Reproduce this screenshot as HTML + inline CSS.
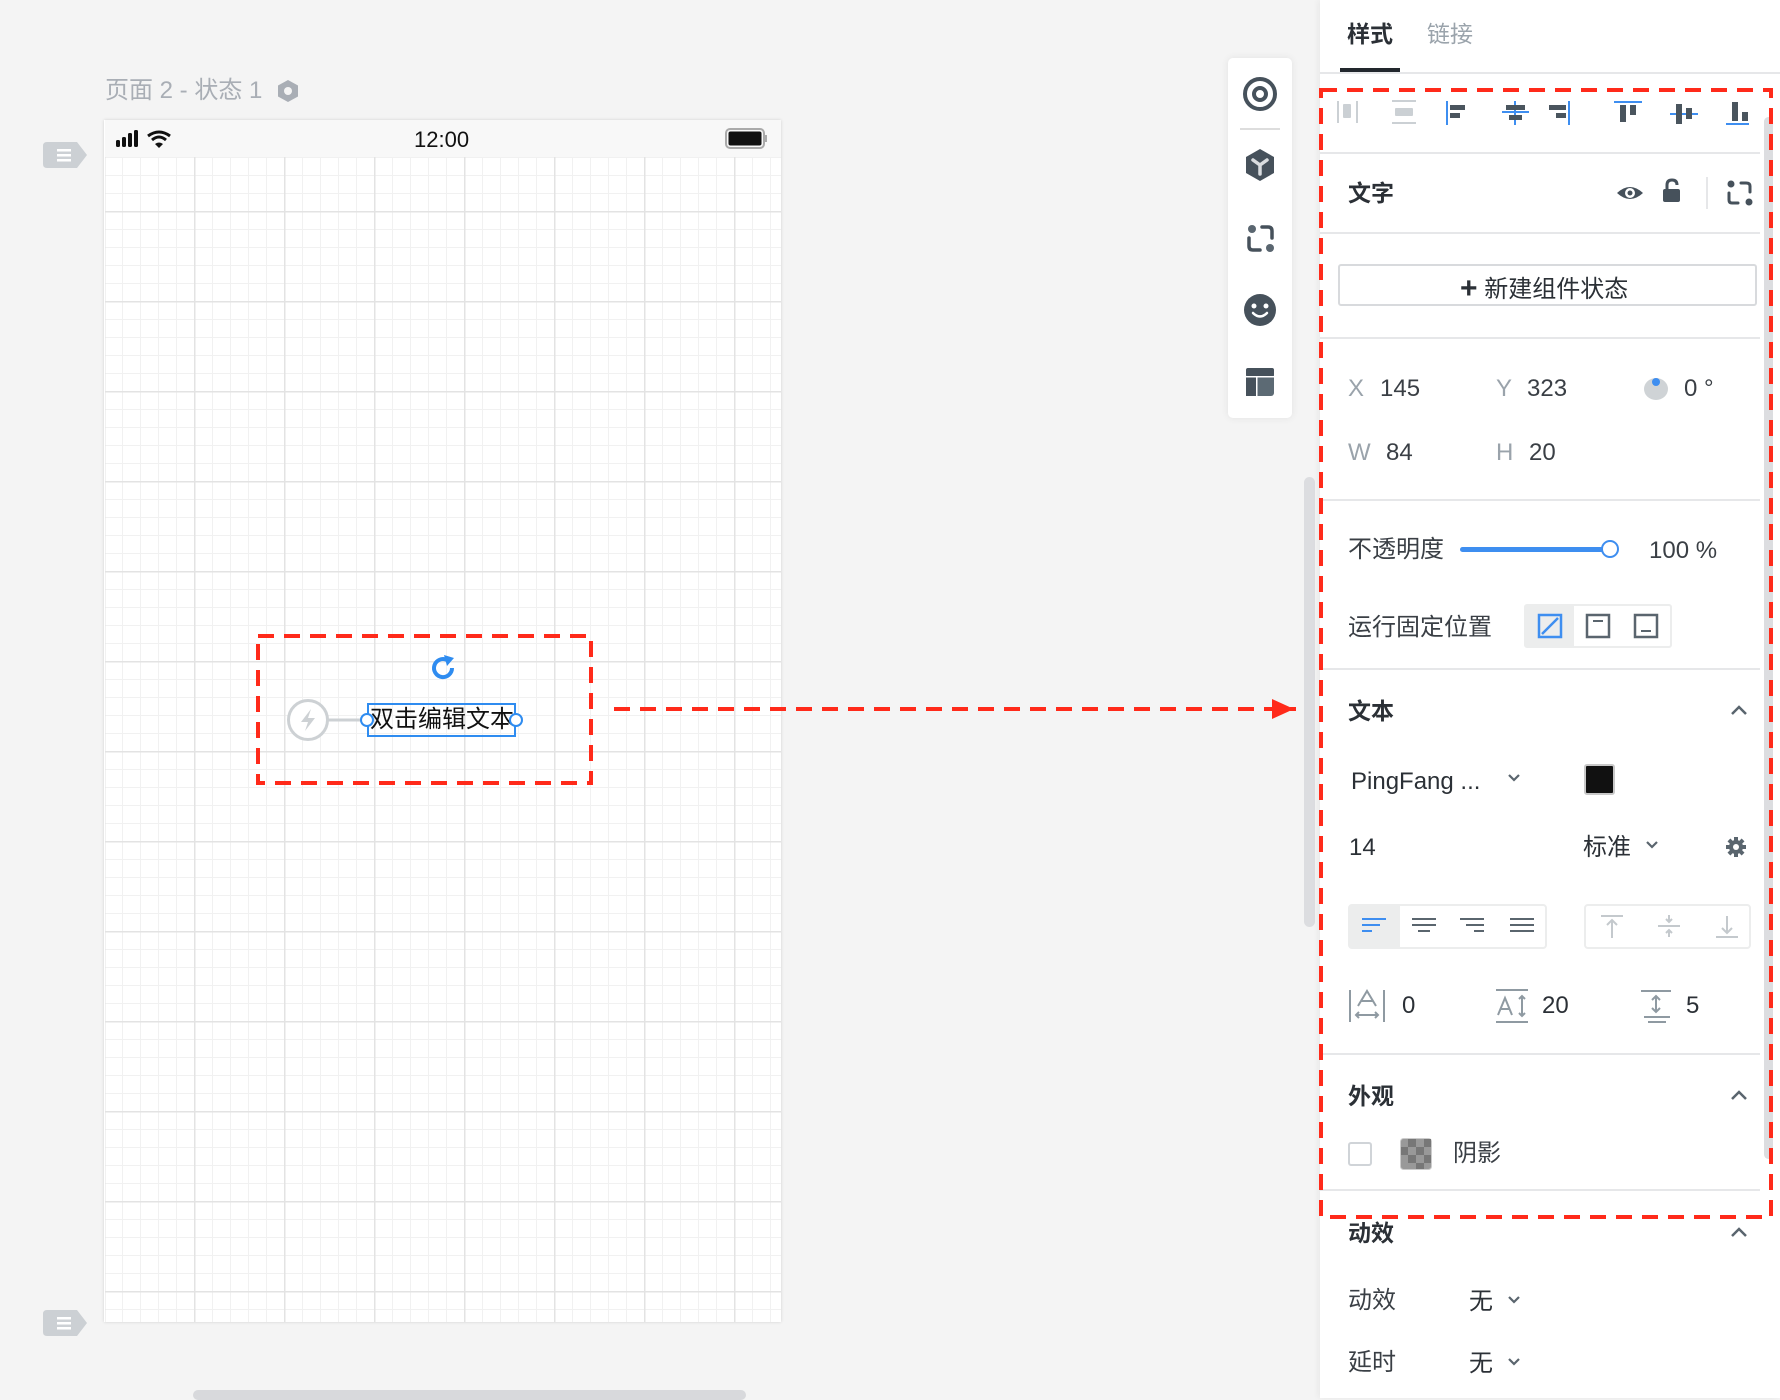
<!DOCTYPE html>
<html><head><meta charset="utf-8">
<style>
*{margin:0;padding:0;box-sizing:border-box}
body{width:1780px;height:1398px;background:#f4f4f4;position:relative;overflow:hidden;font-family:"Liberation Sans","Noto Sans CJK SC",sans-serif;color:#1f2329}
.a{position:absolute}
.t{position:absolute;white-space:nowrap;line-height:1}
.hd{font-weight:bold;font-size:23px;color:#2b3036}
.lb{font-size:24px;color:#3a3f45}
.gy{color:#9aa3ab}
.div{position:absolute;left:1320px;width:440px;height:2px;background:#e6e7e9}
</style></head><body>

<!-- title -->
<div class="t" style="left:105px;top:79px;font-size:24px;color:#a9aeb5">页面 2 - 状态 1</div>
<svg class="a" style="left:277px;top:79px" width="22" height="24" viewBox="0 0 22 24"><polygon points="11,1 21,6.5 21,17.5 11,23 1,17.5 1,6.5" fill="#a9aeb5"/><circle cx="11" cy="12" r="4" fill="#f4f4f4"/></svg>

<!-- side tabs -->
<svg class="a" style="left:43px;top:142px" width="45" height="26"><path d="M4 0H34L44 13L34 26H4Q0 26 0 22V4Q0 0 4 0Z" fill="#ccd0d4"/><rect x="14" y="7" width="14" height="2.5" fill="#fff"/><rect x="14" y="12" width="14" height="2.5" fill="#fff"/><rect x="14" y="17" width="14" height="2.5" fill="#fff"/></svg>
<svg class="a" style="left:43px;top:1310px" width="45" height="26"><path d="M4 0H34L44 13L34 26H4Q0 26 0 22V4Q0 0 4 0Z" fill="#ccd0d4"/><rect x="14" y="7" width="14" height="2.5" fill="#fff"/><rect x="14" y="12" width="14" height="2.5" fill="#fff"/><rect x="14" y="17" width="14" height="2.5" fill="#fff"/></svg>

<!-- phone -->
<div class="a" style="left:104px;top:120px;width:677px;height:1202px;background:#fff;box-shadow:0 0 3px rgba(0,0,0,.15)"></div>
<div class="a" style="left:105px;top:157px;width:676px;height:1165px;background-color:#fff;
background-image:
linear-gradient(to right,#e3e3e3 1.5px,transparent 1.5px),
linear-gradient(to bottom,#e3e3e3 1.5px,transparent 1.5px),
linear-gradient(to right,#f1f1f1 1px,transparent 1px),
linear-gradient(to bottom,#f1f1f1 1px,transparent 1px);
background-size:90px 90px,90px 90px,18px 18px,18px 18px;
background-position:89px 0,0 54px,17px 0,0 0"></div>
<div class="a" style="left:105px;top:120px;width:676px;height:37px;background:#f8f8f8"></div>
<svg class="a" style="left:116px;top:130px" width="80" height="22"><rect x="0" y="10" width="4" height="7" rx="1.5" fill="#111"/><rect x="6" y="7" width="4" height="10" rx="1.5" fill="#111"/><rect x="12" y="3" width="4" height="14" rx="1.5" fill="#111"/><rect x="18" y="0" width="4" height="17" rx="1.5" fill="#111"/>
<path d="M32 6Q43 -2 54 6" stroke="#111" stroke-width="3" fill="none"/><path d="M36 10Q43 4 50 10" stroke="#111" stroke-width="3" fill="none"/><path d="M39 14L43 18L47 14Q43 11 39 14Z" fill="#111"/></svg>
<div class="t" style="left:414px;top:129px;font-size:22px;color:#111">12:00</div>
<svg class="a" style="left:725px;top:128px" width="44" height="22"><rect x="1" y="1" width="38" height="19" rx="4" fill="none" stroke="#aaa" stroke-width="2"/><rect x="3.5" y="3.5" width="33" height="14" rx="2" fill="#111"/><rect x="40" y="7" width="2" height="7" fill="#aaa"/></svg>

<!-- selected element -->
<svg class="a" style="left:255px;top:633px" width="340" height="154"><rect x="3" y="3" width="333" height="147" fill="none" stroke="#ff2a1a" stroke-width="4" stroke-dasharray="16 10"/></svg>
<svg class="a" style="left:428px;top:653px" width="30" height="30" viewBox="0 0 30 30"><path d="M24 15A9 9 0 1 1 19 7" stroke="#2f8cf0" stroke-width="4" fill="none"/><polygon points="16,2 26,5 19,13" fill="#2f8cf0"/></svg>
<svg class="a" style="left:286px;top:697px" width="90" height="46"><circle cx="22" cy="23" r="19.5" fill="#fff" stroke="#cdd1d4" stroke-width="3"/><path d="M25 12L15 25H22L19 34L29 21H22Z" fill="#cdd1d4"/><rect x="42" y="21.5" width="38" height="3" fill="#cdd1d4"/></svg>
<div class="a" style="left:367px;top:703px;width:149px;height:34px;border:2px solid #2f8cf0"></div>
<div class="t" style="left:370px;top:708px;font-size:24px;color:#111">双击编辑文本</div>
<div class="a" style="left:360px;top:713px;width:14px;height:14px;border-radius:50%;background:#fff;border:2.5px solid #2f8cf0"></div>
<div class="a" style="left:509px;top:713px;width:14px;height:14px;border-radius:50%;background:#fff;border:2.5px solid #2f8cf0"></div>

<!-- arrow -->
<svg class="a" style="left:612px;top:697px" width="684" height="24"><path d="M2 12H1270" stroke="#ff2a1a" stroke-width="4" stroke-dasharray="16 10"/><polygon points="660,2 682,12 660,22" fill="#ff2a1a"/></svg>

<!-- toolbar -->
<div class="a" style="left:1228px;top:58px;width:64px;height:360px;background:#fff;border-radius:5px;box-shadow:0 0 8px rgba(0,0,0,.08)"></div>
<svg class="a" style="left:1240px;top:75px" width="40" height="40"><circle cx="20" cy="19" r="15" fill="none" stroke="#46515b" stroke-width="4"/><circle cx="20" cy="19" r="6" fill="none" stroke="#46515b" stroke-width="4"/></svg>
<div class="a" style="left:1240px;top:128px;width:40px;height:2px;background:#ddd"></div>
<svg class="a" style="left:1244px;top:147px" width="34" height="38"><polygon points="16,2 30,10 30,26 16,34 2,26 2,10" fill="#46515b"/><path d="M9 13L16 18L23 13M16 18V27" stroke="#d9dcdf" stroke-width="3.5" fill="none" stroke-linecap="round"/></svg>
<svg class="a" style="left:1244px;top:222px" width="34" height="34"><circle cx="8" cy="7" r="4" fill="#5a6670"/><circle cx="26" cy="26" r="4" fill="#5a6670"/><path d="M5 16V24Q5 28 9 28H16M18 5H24Q28 5 28 9V16" stroke="#46515b" stroke-width="3.5" fill="none" stroke-linecap="round"/></svg>
<svg class="a" style="left:1243px;top:293px" width="34" height="34"><circle cx="17" cy="17" r="16" fill="#46515b"/><circle cx="11" cy="13" r="2.5" fill="#fff"/><circle cx="23" cy="13" r="2.5" fill="#fff"/><path d="M10 20Q17 27 24 20" stroke="#fff" stroke-width="2.5" fill="none" stroke-linecap="round"/></svg>
<svg class="a" style="left:1245px;top:367px" width="30" height="30"><rect x="1" y="1" width="28" height="28" rx="3" fill="#5c6a74"/><rect x="1" y="1" width="28" height="8" rx="2" fill="#46515b"/><rect x="1" y="9" width="10" height="20" fill="#46515b"/><rect x="1" y="9" width="28" height="1.5" fill="#fff"/><rect x="11" y="9" width="1.5" height="20" fill="#fff"/></svg>

<!-- left scrollbar -->
<div class="a" style="left:1304px;top:477px;width:11px;height:450px;border-radius:6px;background:#dcdde0"></div>
<!-- bottom scrollbar -->
<div class="a" style="left:193px;top:1390px;width:553px;height:10px;border-radius:5px;background:#d8d9dc"></div>

<!-- right panel -->
<div class="a" style="left:1320px;top:0;width:460px;height:1398px;background:#fff;box-shadow:-2px 0 6px rgba(0,0,0,.05)"></div>
<div class="t hd" style="left:1347px;top:23px;font-size:23px">样式</div>
<div class="t" style="left:1427px;top:23px;font-size:23px;color:#9aa3ab">链接</div>
<div class="a" style="left:1340px;top:68px;width:60px;height:4px;background:#22272d"></div>
<div class="div" style="top:72px;width:460px"></div>

<!-- scrollbar right -->
<div class="a" style="left:1764px;top:117px;width:9px;height:1042px;border-radius:5px;background:#dcdde0"></div>

<!-- align icons -->
<svg class="a" style="left:1334px;top:96px" width="430" height="34">
<g fill="#cbd0d4"><rect x="3" y="5" width="2" height="22"/><rect x="22" y="5" width="2" height="22"/><rect x="9" y="8" width="8" height="14" rx="1"/>
<rect x="58" y="4" width="24" height="2"/><rect x="58" y="26" width="24" height="2"/><rect x="61" y="12" width="18" height="8" rx="1"/></g>
<g fill="#3e8ef0"><rect x="112" y="5" width="2" height="24"/><rect x="168" y="15" width="27" height="2"/><rect x="180" y="5" width="2" height="24"/><rect x="234" y="5" width="2" height="24"/>
<rect x="280" y="5" width="28" height="2"/><rect x="336" y="17" width="28" height="2"/><rect x="392" y="27" width="23" height="2"/></g>
<g fill="#4a555e"><rect x="116" y="9" width="15" height="5"/><rect x="116" y="17" width="10" height="5"/>
<rect x="172" y="9" width="19" height="5"/><rect x="175" y="19" width="13" height="5"/>
<rect x="215" y="9" width="17" height="5"/><rect x="222" y="17" width="10" height="5"/>
<rect x="286" y="9" width="6" height="17"/><rect x="296" y="9" width="6" height="10"/>
<rect x="342" y="8" width="6" height="20"/><rect x="352" y="12" width="6" height="11"/>
<rect x="398" y="6" width="6" height="19"/><rect x="408" y="16" width="6" height="9"/></g>
</svg>
<div class="div" style="top:152px"></div>

<!-- 文字 -->
<div class="t hd" style="left:1348px;top:182px">文字</div>
<svg class="a" style="left:1615px;top:182px" width="30" height="22"><path d="M2 11Q15 -1 28 11Q15 23 2 11Z" fill="#46515b"/><circle cx="15" cy="11" r="5" fill="#fff"/><circle cx="15" cy="11" r="2.5" fill="#46515b"/></svg>
<svg class="a" style="left:1661px;top:178px" width="22" height="26"><path d="M6 12V7Q6 2 11 2Q16 2 16 7" stroke="#46515b" stroke-width="3" fill="none"/><rect x="2" y="11" width="17" height="13" rx="2" fill="#46515b"/></svg>
<div class="a" style="left:1706px;top:177px;width:2px;height:32px;background:#e6e7e9"></div>
<svg class="a" style="left:1726px;top:180px" width="28" height="26"><circle cx="5" cy="4" r="3.5" fill="#46515b"/><circle cx="23" cy="22" r="3.5" fill="#46515b"/><path d="M3 13V20Q3 23 6 23H12M15 3H20Q24 3 24 6V12" stroke="#46515b" stroke-width="3" fill="none" stroke-linecap="round"/></svg>
<div class="div" style="top:232px"></div>

<!-- button -->
<div class="a" style="left:1338px;top:264px;width:419px;height:42px;border:2px solid #d8dadd;border-radius:3px"></div>
<div class="t" style="left:1460px;top:273px;font-size:24px;color:#2b3036"><b style="font-size:30px;position:relative;top:1px">+</b> 新建组件状态</div>
<div class="div" style="top:337px"></div>

<!-- XY -->
<div class="t lb gy" style="left:1348px;top:377px">X</div>
<div class="t lb" style="left:1380px;top:377px">145</div>
<div class="t lb gy" style="left:1496px;top:377px">Y</div>
<div class="t lb" style="left:1527px;top:377px">323</div>
<svg class="a" style="left:1643px;top:376px" width="26" height="24"><ellipse cx="13" cy="13" rx="12" ry="11" fill="#cfd3d6"/><circle cx="13" cy="6" r="4" fill="#3e8ef0"/></svg>
<div class="t lb" style="left:1684px;top:377px">0 °</div>
<div class="t lb gy" style="left:1348px;top:441px">W</div>
<div class="t lb" style="left:1386px;top:441px">84</div>
<div class="t lb gy" style="left:1496px;top:441px">H</div>
<div class="t lb" style="left:1529px;top:441px">20</div>
<div class="div" style="top:499px"></div>

<!-- opacity -->
<div class="t lb" style="left:1348px;top:538px">不透明度</div>
<div class="a" style="left:1460px;top:547px;width:150px;height:5px;border-radius:3px;background:#3e8ef0"></div>
<div class="a" style="left:1601px;top:540px;width:18px;height:18px;border-radius:50%;background:#fff;border:2.5px solid #3e8ef0"></div>
<div class="t lb" style="left:1649px;top:539px">100 %</div>

<div class="t lb" style="left:1348px;top:616px">运行固定位置</div>
<div class="a" style="left:1524px;top:604px;width:148px;height:44px;border:2px solid #eceded;border-radius:3px"></div>
<div class="a" style="left:1526px;top:606px;width:48px;height:40px;background:#eceded"></div>
<svg class="a" style="left:1537px;top:613px" width="130" height="28"><rect x="2" y="2" width="22" height="22" fill="none" stroke="#3e8ef0" stroke-width="2.5"/><path d="M5 21L21 5" stroke="#3e8ef0" stroke-width="2.5"/>
<rect x="50" y="2" width="22" height="22" fill="none" stroke="#5a656e" stroke-width="2.5"/><rect x="56" y="7" width="10" height="2" fill="#5a656e"/>
<rect x="98" y="2" width="22" height="22" fill="none" stroke="#5a656e" stroke-width="2.5"/><rect x="104" y="17" width="10" height="2" fill="#5a656e"/></svg>
<div class="div" style="top:668px"></div>

<!-- 文本 -->
<div class="t hd" style="left:1348px;top:700px">文本</div>
<svg class="a" style="left:1730px;top:704px" width="18" height="12"><path d="M2 10L9 3L16 10" stroke="#5a656e" stroke-width="2.5" fill="none"/></svg>
<div class="t lb" style="left:1351px;top:770px;color:#2b3036">PingFang ...</div>
<svg class="a" style="left:1507px;top:773px" width="14" height="10"><path d="M2 2L7 7L12 2" stroke="#5a656e" stroke-width="2.2" fill="none"/></svg>
<div class="a" style="left:1584px;top:764px;width:31px;height:31px;border-radius:3px;background:#111;border:2px solid #c8c8c8"></div>
<div class="t lb" style="left:1349px;top:836px;color:#2b3036">14</div>
<div class="t lb" style="left:1583px;top:836px;color:#2b3036">标准</div>
<svg class="a" style="left:1645px;top:840px" width="14" height="10"><path d="M2 2L7 7L12 2" stroke="#5a656e" stroke-width="2.2" fill="none"/></svg>
<svg class="a" style="left:1725px;top:836px" width="22" height="22" viewBox="0 0 22 22"><g fill="#5a656e"><circle cx="11" cy="11" r="7"/><rect x="9" y="1" width="4" height="20"/><rect x="1" y="9" width="20" height="4"/><rect x="9" y="1" width="4" height="20" transform="rotate(45 11 11)"/><rect x="9" y="1" width="4" height="20" transform="rotate(-45 11 11)"/></g><circle cx="11" cy="11" r="3" fill="#fff"/></svg>

<!-- align groups -->
<div class="a" style="left:1348px;top:904px;width:199px;height:45px;border:2px solid #eceded;border-radius:4px"></div>
<div class="a" style="left:1350px;top:906px;width:50px;height:41px;background:#eceded"></div>
<svg class="a" style="left:1360px;top:912px" width="180" height="30"><g fill="#3e8ef0"><rect x="2" y="6" width="24" height="2"/><rect x="2" y="12" width="18" height="2"/><rect x="2" y="18" width="10" height="2"/></g>
<g fill="#5a656e"><rect x="52" y="6" width="24" height="2"/><rect x="52" y="12" width="24" height="2"/><rect x="58" y="18" width="12" height="2"/>
<rect x="100" y="6" width="24" height="2"/><rect x="106" y="12" width="18" height="2"/><rect x="114" y="18" width="10" height="2"/>
<rect x="150" y="6" width="24" height="2"/><rect x="150" y="12" width="24" height="2"/><rect x="150" y="18" width="24" height="2"/></g></svg>
<div class="a" style="left:1584px;top:904px;width:167px;height:45px;border:2px solid #eceded;border-radius:4px"></div>
<svg class="a" style="left:1598px;top:912px" width="150" height="30" stroke="#c4c9cd" stroke-width="2" fill="none"><path d="M3 4H25M14 8V26M9 13L14 8L19 13"/><path d="M60 14H82M71 3V10M68 7L71 10L74 7M71 25V18M68 21L71 18L74 21"/><path d="M118 25H140M129 4V21M124 16L129 21L134 16"/></svg>

<!-- spacing -->
<svg class="a" style="left:1348px;top:988px" width="40" height="36" stroke="#8f9aa2" stroke-width="2" fill="none"><path d="M2 2V34M36 2V34M10 18L19 3L28 18M13 13H25M8 27H30M11 24L8 27L11 30M27 24L30 27L27 30"/></svg>
<div class="t lb" style="left:1402px;top:994px;color:#2b3036">0</div>
<svg class="a" style="left:1495px;top:988px" width="36" height="36" stroke="#8f9aa2" stroke-width="2" fill="none"><path d="M1 2H33M1 34H33M3 27L10 10L17 27M6 21H14M27 8V28M24 11L27 8L30 11M24 25L27 28L30 25"/></svg>
<div class="t lb" style="left:1542px;top:994px;color:#2b3036">20</div>
<svg class="a" style="left:1639px;top:988px" width="36" height="36" stroke="#8f9aa2" stroke-width="2" fill="none"><path d="M2 3H32M5 29H31M9 34H27M17 8V24M13 12L17 8L21 12M13 20L17 24L21 20"/></svg>
<div class="t lb" style="left:1686px;top:994px;color:#2b3036">5</div>
<div class="div" style="top:1053px"></div>

<!-- 外观 -->
<div class="t hd" style="left:1348px;top:1085px">外观</div>
<svg class="a" style="left:1730px;top:1089px" width="18" height="12"><path d="M2 10L9 3L16 10" stroke="#5a656e" stroke-width="2.5" fill="none"/></svg>
<div class="a" style="left:1348px;top:1142px;width:24px;height:24px;border:2px solid #d0d4d8;border-radius:3px"></div>
<svg class="a" style="left:1400px;top:1138px" width="32" height="32"><rect x="0.5" y="0.5" width="31" height="31" rx="3" fill="#999" stroke="#ccc"/><g fill="#777"><rect x="8" y="1" width="8" height="8"/><rect x="24" y="1" width="7" height="8"/><rect x="1" y="9" width="7" height="8"/><rect x="16" y="9" width="8" height="8"/><rect x="8" y="17" width="8" height="8"/><rect x="24" y="17" width="7" height="8"/><rect x="16" y="25" width="8" height="6"/></g></svg>
<div class="t lb" style="left:1453px;top:1142px">阴影</div>
<div class="div" style="top:1189px"></div>

<!-- red dashed panel box -->
<svg class="a" style="left:1317px;top:86px" width="458" height="1135"><rect x="4" y="4" width="450" height="1127" fill="none" stroke="#ff2a1a" stroke-width="4" stroke-dasharray="16 10"/></svg>

<!-- 动效 -->
<div class="t hd" style="left:1348px;top:1222px">动效</div>
<svg class="a" style="left:1730px;top:1226px" width="18" height="12"><path d="M2 10L9 3L16 10" stroke="#5a656e" stroke-width="2.5" fill="none"/></svg>
<div class="t lb" style="left:1348px;top:1289px">动效</div>
<div class="t lb" style="left:1469px;top:1290px;color:#2b3036">无</div>
<svg class="a" style="left:1507px;top:1295px" width="14" height="10"><path d="M2 2L7 7L12 2" stroke="#5a656e" stroke-width="2.2" fill="none"/></svg>
<div class="t lb" style="left:1348px;top:1351px">延时</div>
<div class="t lb" style="left:1469px;top:1352px;color:#2b3036">无</div>
<svg class="a" style="left:1507px;top:1357px" width="14" height="10"><path d="M2 2L7 7L12 2" stroke="#5a656e" stroke-width="2.2" fill="none"/></svg>
</body></html>
